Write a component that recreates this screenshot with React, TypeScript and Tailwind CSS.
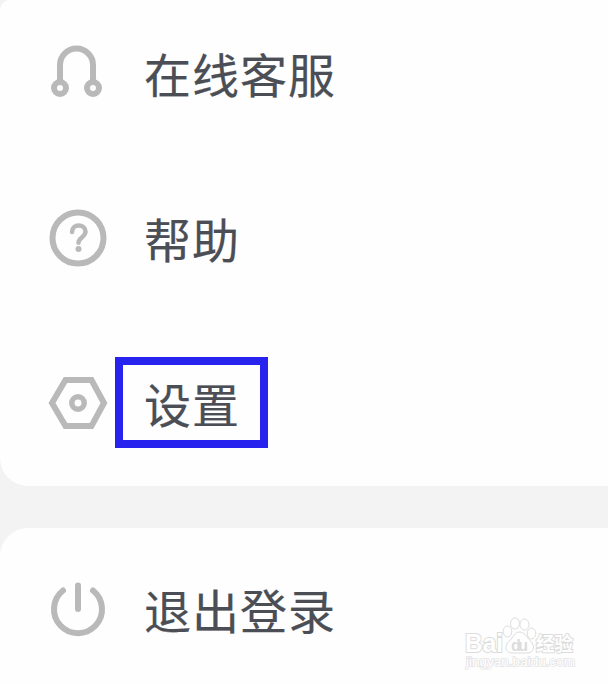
import React from "react";

type RowProps = {
  icon: React.ReactNode;
  label: string;
  highlighted?: boolean;
};

function HeadsetIcon() {
  return (
    <svg className="size-[60px]" viewBox="0 0 60 60" fill="none" stroke="#b9b9b9">
      <path d="M12 38V22a16.500 16.500 0 0 1 33 0V38" strokeWidth="6" />
      <circle cx="12" cy="45" r="6" strokeWidth="6" />
      <circle cx="45" cy="45" r="6" strokeWidth="6" />
    </svg>
  );
}

function HelpIcon() {
  return (
    <svg className="size-[60px]" viewBox="0 0 60 60" fill="none" stroke="#b9b9b9">
      <circle cx="30" cy="30" r="25.500" strokeWidth="6" />
      <path
        d="M24 24c.3-4.800 3.500-6.500 6.500-6.500 4 0 7 2.500 7 6.300 0 5.200-7 5.500-7 11"
        strokeWidth="4.500"
        strokeLinecap="round"
      />
      <circle cx="30.500" cy="41" r="3" fill="#b9b9b9" stroke="none" />
    </svg>
  );
}

function SettingsIcon() {
  return (
    <svg className="size-[60px]" viewBox="0 0 60 60" fill="none" stroke="#b9b9b9">
      <path d="M17.500 7H43.500L56 30L43.500 53H17.500L4 30Z" strokeWidth="6" />
      <circle cx="30" cy="30" r="6.200" strokeWidth="5.500" />
    </svg>
  );
}

function PowerIcon() {
  return (
    <svg
      className="size-[60px]"
      viewBox="0 0 60 60"
      fill="none"
      stroke="#b9b9b9"
      strokeWidth="6"
      strokeLinecap="round"
    >
      <path d="M15 11.500A24 24 0 1 0 45 11.500" />
      <path d="M30 6.500v23.500" />
    </svg>
  );
}

function Row({ icon, label, highlighted }: RowProps) {
  return (
    <div className="flex h-[70px] items-center pl-12">
      {icon}
      <div className="relative ml-9 whitespace-nowrap text-[47px] leading-[68px] tracking-[1px] text-[#4c4e56] [-webkit-text-stroke:0.2px_#4c4e56]">
        {label}
        {highlighted && (
          <span className="absolute -left-[29px] -top-[12px] h-[91px] w-[153px] border-8 border-[#2722ee]" />
        )}
      </div>
    </div>
  );
}

function Watermark() {
  return (
    <svg
      className="absolute bottom-0 right-7 h-[70px] w-[120px]"
      viewBox="0 0 120 70"
      fill="#fff"
      stroke="#dcdcdc"
      strokeWidth="1"
      fontFamily="'Liberation Sans', 'Noto Sans CJK SC', sans-serif"
    >
      <g fontWeight="700" strokeWidth="2" paintOrder="stroke">
        <text x="5" y="38" fontSize="25.500" textLength="38" lengthAdjust="spacingAndGlyphs">Bai</text>
        <text x="76" y="37" fontSize="19.500" textLength="37" lengthAdjust="spacingAndGlyphs">经验</text>
      </g>
      <path d="M59.500 18c-5 0-6 5-10 9-6 5-4 12 3 12h14c8 0 9-7 4-12-4-4-6-9-11-9Z" />
      <ellipse cx="47.500" cy="17.500" rx="4.300" ry="5.500" />
      <ellipse cx="55" cy="9.500" rx="4.500" ry="5.500" />
      <ellipse cx="64.500" cy="10.500" rx="4.500" ry="5.500" />
      <ellipse cx="71.500" cy="19.500" rx="4.300" ry="5.500" />
      <text x="51" y="37" fontSize="16" textLength="17" fill="#dcdcdc" stroke="none" fontWeight="700">du</text>
      <text x="6" y="52" fontSize="12.500" textLength="109" lengthAdjust="spacingAndGlyphs" strokeWidth="1.500" stroke="#e4e4e4" paintOrder="stroke">
        jingyan.baidu.com
      </text>
    </svg>
  );
}

function App() {
  return (
    <div className="relative flex h-[684px] w-full flex-col gap-[42px] overflow-hidden bg-[#f3f3f3] font-['Noto_Sans_CJK_SC',sans-serif]">
      <div className="flex h-[486px] shrink-0 flex-col gap-[95px] rounded-bl-[28px] rounded-tl-[10px] bg-[#fefefe] pt-[38px]">
        <Row icon={<HeadsetIcon />} label="在线客服" />
        <Row icon={<HelpIcon />} label="帮助" />
        <Row icon={<SettingsIcon />} label="设置" highlighted />
      </div>
      <div className="flex-1 rounded-tl-[28px] bg-[#fefefe] pt-[46px]">
        <Row icon={<PowerIcon />} label="退出登录" />
      </div>
      <Watermark />
    </div>
  );
}

export default App;
